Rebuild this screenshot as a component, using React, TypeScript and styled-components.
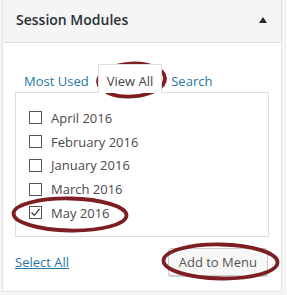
import React from "react";
import styled, { createGlobalStyle } from "styled-components";

const Global = createGlobalStyle`
  html, body { margin: 0; padding: 0; background: #f5f5f5; }
  body { font-family: "Open Sans", "Liberation Sans", sans-serif; }
  * { box-sizing: border-box; }
`;

const Page = styled.div`
  position: relative;
  width: 287px;
  height: 295px;
  padding-left: 2px;
  overflow: hidden;
`;

const Panel = styled.div`
  width: 280px;
  height: 292px;
  background: #fff;
  border: 1px solid #e2e2e2;
  border-top: none;
  display: flex;
  flex-direction: column;
`;

const Header = styled.div`
  height: 43px;
  background: #f5f5f5;
  border-bottom: 1px solid #dedede;
  display: flex;
  align-items: flex-start;
  justify-content: space-between;
  padding: 10px 14px 0 13px;
`;

const Title = styled.h3`
  margin: 0;
  font-size: 14px;
  font-weight: 600;
  line-height: 20px;
  color: #2a2f34;
`;

const Arrow = styled.span`
  width: 0;
  height: 0;
  margin-top: 7px;
  border-left: 4px solid transparent;
  border-right: 4px solid transparent;
  border-bottom: 6px solid #23282d;
`;

const Body = styled.div`
  padding: 21px 12px 0 12px;
  display: flex;
  flex-direction: column;
`;

const Tabs = styled.ul`
  list-style: none;
  margin: 0;
  padding: 0;
  display: flex;
  position: relative;
  z-index: 1;
`;

const Tab = styled.li<{ $active?: boolean }>`
  padding: 6px 8px 2px;
  margin-bottom: -1px;
  line-height: 20px;
  font-size: 13px;
  border: 1px solid ${(p) => (p.$active ? "#dddddd" : "transparent")};
  border-bottom: none;
  background: ${(p) => (p.$active ? "#fff" : "transparent")};
  color: ${(p) => (p.$active ? "#444" : "#1f77a3")};
`;

const ListBox = styled.ul`
  list-style: none;
  margin: 0;
  padding: 13px 0 11px 13px;
  border: 1px solid #dddddd;
  display: flex;
  flex-direction: column;
`;

const Item = styled.li`
  height: 23.75px;
  display: flex;
  align-items: center;
  gap: 9px;
  font-size: 13px;
  color: #4a4a4a;
`;

const Box = styled.span`
  width: 13px;
  height: 13px;
  border: 1px solid #555;
  background: #fff;
  display: flex;
  align-items: center;
  justify-content: center;
  flex: none;
`;

const Footer = styled.div`
  margin-top: 11px;
  display: flex;
  align-items: center;
  justify-content: space-between;
`;

const LinkText = styled.span`
  font-size: 13px;
  line-height: 20px;
  color: #1f77a3;
  text-decoration: underline;
`;

const Button = styled.span`
  height: 28px;
  line-height: 26px;
  padding: 0 10px;
  font-size: 13px;
  color: #555;
  background: #f7f7f7;
  border: 1px solid #cccccc;
  border-radius: 3px;
  box-shadow: 0 1px 0 #cccccc;
  margin-right: 1px;
`;

const Marks = styled.svg`
  position: absolute;
  left: 0;
  top: 0;
  pointer-events: none;
`;

const months = ["April 2016", "February 2016", "January 2016", "March 2016", "May 2016"];

export default function App() {
  return (
    <>
      <Global />
      <Page>
        <Panel>
          <Header>
            <Title>Session Modules</Title>
            <Arrow />
          </Header>
          <Body>
            <Tabs>
              <Tab>Most Used</Tab>
              <Tab $active>View All</Tab>
              <Tab>Search</Tab>
            </Tabs>
            <ListBox>
              {months.map((m) => (
                <Item key={m}>
                  <Box>
                    {m === "May 2016" && (
                      <svg width="11" height="11" viewBox="0 0 11 11">
                        <path d="M1.5 5.5 L4.3 8.3 L9.5 2" fill="none" stroke="#444" strokeWidth="1.3" />
                      </svg>
                    )}
                  </Box>
                  {m}
                </Item>
              ))}
            </ListBox>
            <Footer>
              <LinkText>Select All</LinkText>
              <Button>Add to Menu</Button>
            </Footer>
          </Body>
        </Panel>
        <Marks width="287" height="295" viewBox="0 0 287 295">
          <g fill="none" stroke="#7d1e23" strokeWidth="3.8">
            <ellipse cx="131.5" cy="80" rx="33.5" ry="16.5" transform="rotate(-3 131.5 80)" />
            <ellipse cx="70" cy="214.5" rx="56.5" ry="16" transform="rotate(1 70 214.5)" />
            <ellipse cx="220.5" cy="261.5" rx="57" ry="17" transform="rotate(1 220.5 261.5)" />
          </g>
        </Marks>
      </Page>
    </>
  );
}
